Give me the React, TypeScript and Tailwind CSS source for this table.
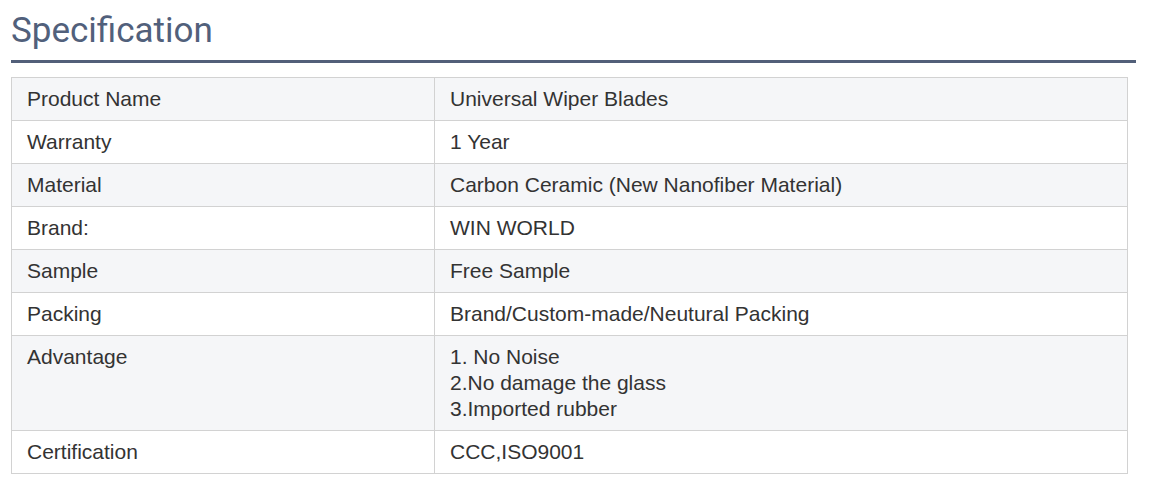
import React from 'react';

const rows: { label: string; value: string[] }[] = [
  { label: 'Product Name', value: ['Universal Wiper Blades'] },
  { label: 'Warranty', value: ['1 Year'] },
  { label: 'Material', value: ['Carbon Ceramic (New Nanofiber Material)'] },
  { label: 'Brand:', value: ['WIN WORLD'] },
  { label: 'Sample', value: ['Free Sample'] },
  { label: 'Packing', value: ['Brand/Custom-made/Neutural Packing'] },
  { label: 'Advantage', value: ['1. No Noise', '2.No damage the glass', '3.Imported rubber'] },
  { label: 'Certification', value: ['CCC,ISO9001'] },
];

const App: React.FC = () => {
  return (
    <div className="w-[1173px] h-[485px] bg-white pl-[11px] pt-[11px]">
      <div className="w-[1125px] border-b-[3px] border-[#525f79] pb-[9px]">
        <h2 className="text-[35px] leading-[40px] text-[#51607b] font-['Roboto',sans-serif]">Specification</h2>
      </div>
      <table className="mt-[14px] w-[1117px] border-collapse font-['Liberation_Sans',Arial,sans-serif] text-[21px] leading-[26px] text-[#333]">
        <tbody>
          {rows.map((row, i) => (
            <tr key={row.label} className={i % 2 === 0 ? 'bg-[#f5f6f8]' : 'bg-white'}>
              <td className="w-[423px] border border-[#d2d2d2] px-[15px] py-[8px] align-top">{row.label}</td>
              <td className="border border-[#d2d2d2] px-[15px] py-[8px] align-top">
                {row.value.map((v) => (
                  <div key={v}>{v}</div>
                ))}
              </td>
            </tr>
          ))}
        </tbody>
      </table>
    </div>
  );
};

export default App;
